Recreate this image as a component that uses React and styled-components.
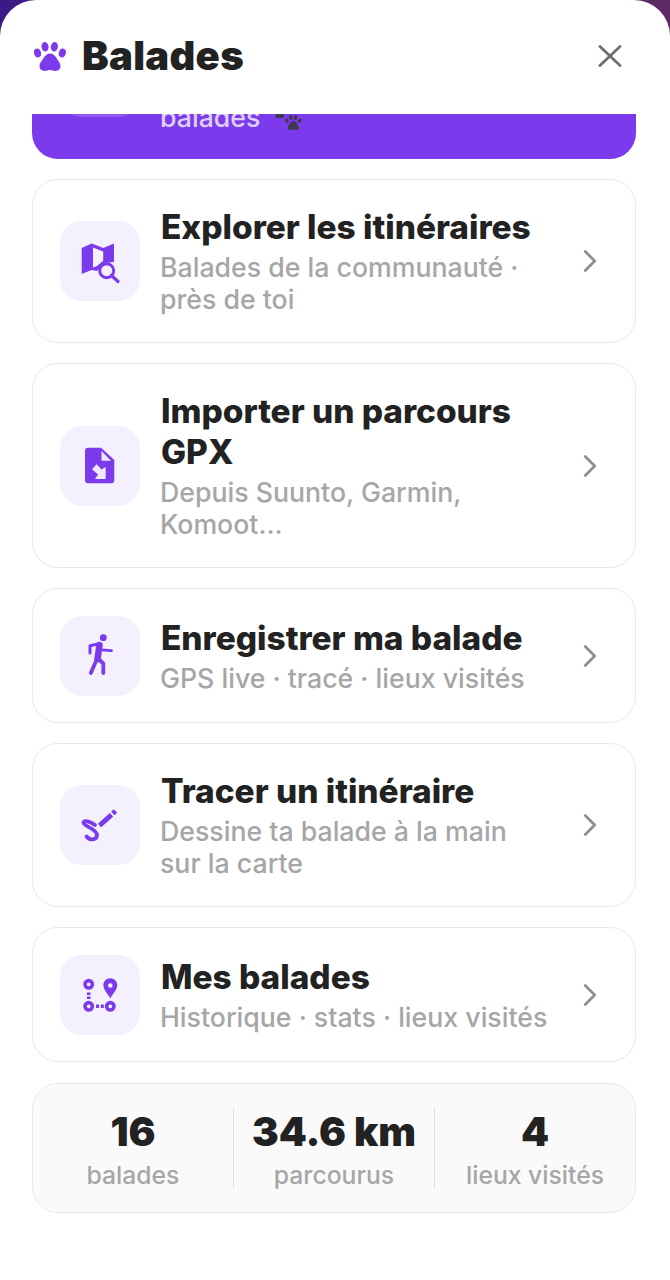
import React from 'react'
import styled, { createGlobalStyle } from 'styled-components'
import { ChevronRight } from 'lucide-react'

const GlobalStyle = createGlobalStyle`
  html, body {
    margin: 0;
    padding: 0;
    background: #fff;
  }
  body {
    font-family: Inter, "Liberation Sans", sans-serif;
  }
`

const Page = styled.div`
  width: 670px;
  height: 1280px;
  overflow: hidden;
  background: linear-gradient(90deg, #3a1b85 0%, #5e2a66 100%);
`
const Sheet = styled.div`
  height: 1280px;
  background: #fff;
  border-radius: 36px 36px 0 0;
  display: flex;
  flex-direction: column;
`
const Header = styled.header`
  height: 114px;
  box-sizing: border-box;
  flex-shrink: 0;
  display: flex;
  align-items: center;
  padding: 0 48px 2px 34px;
`
const HeaderPaw = styled.svg`
  margin-top: 2px;
  flex-shrink: 0;
`
const Title = styled.h1`
  margin: 0 0 0 16px;
  flex: 1;
  font-size: 40px;
  line-height: 46px;
  font-weight: 900;
  letter-spacing: 0.3px;
  color: #222;
`
const CloseButton = styled.button`
  border: 0;
  padding: 0;
  background: none;
  display: flex;
`
const Content = styled.div`
  display: flex;
  flex-direction: column;
  gap: 20px;
  padding: 0 34px 0 32px;
`
const Banner = styled.div`
  height: 45px;
  background: #7c3aed;
  border-radius: 0 0 26px 26px;
  overflow: hidden;
  display: flex;
  align-items: flex-start;
  padding-left: 28px;
`
const BannerTile = styled.div`
  width: 80px;
  height: 80px;
  flex-shrink: 0;
  margin-top: -77px;
  background: rgba(255, 255, 255, 0.16);
  border-radius: 22px;
`
const BannerText = styled.span`
  margin: -13px 0 0 20px;
  font-size: 26.700px;
  line-height: 32px;
  font-weight: 500;
  color: #ddd0fb;
`
const BannerPaw = styled.svg`
  margin-left: 13px;
  width: 32px;
  height: 20px;
  flex-shrink: 0;
`
const Card = styled.div`
  display: flex;
  align-items: center;
  box-sizing: border-box;
  min-height: ${p => p.$height}px;
  padding: 0 26px 0 27px;
  background: #fff;
  border: 1px solid #e9e9eb;
  border-radius: 26px;
`
const Tile = styled.div`
  width: 80px;
  height: 80px;
  flex-shrink: 0;
  margin-right: 21px;
  background: #f4f0fe;
  border-radius: 22px;
`
const Body = styled.div`
  width: 390px;
  margin-right: auto;
  display: flex;
  flex-direction: column;
`
const CardTitle = styled.div`
  font-size: 33.400px;
  line-height: 41px;
  font-weight: 800;
  color: #222;
`
const CardText = styled.div`
  margin: 3px 0 0 -1px;
  font-size: 26.700px;
  line-height: 32px;
  font-weight: 500;
  color: #a6a6a8;
`
const Stats = styled.div`
  display: flex;
  align-items: center;
  height: 130px;
  margin-top: 1px;
  box-sizing: border-box;
  background: #fafafa;
  border: 1px solid #e9e9eb;
  border-radius: 26px;
`
const Stat = styled.div`
  flex: 1;
  height: 82px;
  box-sizing: border-box;
  padding-top: 3px;
  display: flex;
  flex-direction: column;
  align-items: center;
  justify-content: center;
  & + & {
    border-left: 1px solid #e2e2e4;
  }
`
const StatValue = styled.div`
  font-size: 40px;
  line-height: 48px;
  font-weight: 900;
  color: #222;
  white-space: nowrap;
`
const StatLabel = styled.div`
  margin-top: 3px;
  font-size: 24.700px;
  line-height: 32px;
  font-weight: 500;
  color: #a6a6a8;
`
const Chevron = styled(ChevronRight)`
  flex-shrink: 0;
  color: #8e8e92;
`

const Paw = ({ fill }) => (
  <g fill={fill}>
    <ellipse cx="3.5" cy="11" rx="3.4" ry="4.5" transform="rotate(-20 3.5 11)" />
    <ellipse cx="11" cy="4.8" rx="3.5" ry="4.8" transform="rotate(-8 11 4.8)" />
    <ellipse cx="20.4" cy="4.8" rx="3.5" ry="4.8" transform="rotate(8 20.4 4.8)" />
    <ellipse cx="28.3" cy="11" rx="3.4" ry="4.5" transform="rotate(20 28.3 11)" />
    <path d="M16 11.500c3 0 5 2 6.800 5 1.300 2.200 3.700 4.700 3.700 7.600 0 3.200-2.400 4.900-5 4.900-2 0-3.500-.9-5.500-.9s-3.500.9-5.500.9c-2.600 0-5-1.700-5-4.900 0-2.900 2.400-5.400 3.700-7.600 1.800-3 3.800-5 6.800-5z" />
  </g>
)

const purple = '#7c3aed'

const MapIcon = () => (
  <svg width="80" height="80" viewBox="0 0 80 80">
    <path
      fill={purple}
      fillRule="evenodd"
      d="M21.700 27 31.700 22.500 43.300 27 54 22.500V41L44 42 37 50 31.700 49 21.700 53zM33 26.500V46.500L37 45 43.200 39.800V30.500z"
    />
    <circle cx="46.700" cy="49.700" r="7" fill="#f4f0fe" stroke={purple} strokeWidth="3" />
    <path d="M51.500 54.500 58 60.500" stroke={purple} strokeWidth="3.200" strokeLinecap="round" />
  </svg>
)

const FileIcon = () => (
  <svg width="80" height="80" viewBox="0 0 80 80">
    <path
      fill={purple}
      d="M28 21.700h13L54.300 34v20.300a3 3 0 0 1-3 3H28a3 3 0 0 1-3-3V24.700a3 3 0 0 1 3-3z"
    />
    <path fill="#f0e8fe" d="M41.500 25 51 34.800H41.500z" />
    <path fill="#f0e8fe" d="M32 43.300 36.700 38.300 41.500 43.500 45.700 41V53H35L38 48.500z" />
  </svg>
)

const WalkIcon = () => (
  <svg width="80" height="80" viewBox="0 0 80 80">
    <circle cx="43.300" cy="21.700" r="3.400" fill={purple} />
    <g fill="none" stroke={purple} strokeLinecap="round" strokeLinejoin="round">
      <path strokeWidth="6.500" d="M39.500 29 37.500 43" />
      <path strokeWidth="3" d="M38 28 30 29.700V37" />
      <path strokeWidth="2.800" d="M41.700 33.800 51.500 34.600" />
      <path strokeWidth="3.800" d="M36.500 44 30.800 57" />
      <path strokeWidth="3.800" d="M38 42.500 43.300 47.500V57" />
    </g>
  </svg>
)

const DrawIcon = () => (
  <svg width="80" height="80" viewBox="0 0 80 80">
    <g fill="none" stroke={purple} strokeLinecap="round">
      <path
        strokeWidth="3.800"
        d="M35 40C30 36 24 35 23.500 37.500 23 41 37 44 37 50 37 55 30 56 26.500 51.500"
      />
      <path strokeWidth="5" strokeLinecap="butt" d="M39.500 40.500 51.500 29.800" />
      <path strokeWidth="5" strokeLinecap="butt" d="M52.800 28.500 55.500 26" />
    </g>
  </svg>
)

const RouteIcon = () => (
  <svg width="80" height="80" viewBox="0 0 80 80">
    <g fill="none" stroke={purple} strokeWidth="3.600">
      <circle cx="28.700" cy="29.300" r="3.700" />
      <circle cx="28.700" cy="51.300" r="3.700" />
      <circle cx="50.300" cy="51.300" r="3.700" />
      <path d="M28.700 36.500V45" strokeDasharray="2.500 1.500" strokeDashoffset="-1" />
      <path d="M35.500 51.300H44" strokeDasharray="3 1.800" strokeDashoffset="-0.500" />
    </g>
    <path
      fill={purple}
      d="M50.300 23.300c3.900 0 6.900 3 6.900 6.800 0 4.700-4.400 9.100-6.900 13.200-2.500-4.100-6.900-8.500-6.900-13.200 0-3.800 3-6.800 6.900-6.800z"
    />
    <circle cx="50.300" cy="30.500" r="2.300" fill="#f4f0fe" />
  </svg>
)

const items = [
  {
    icon: <MapIcon />,
    height: 164,
    title: 'Explorer les itinéraires',
    text: 'Balades de la communauté · près de toi',
  },
  {
    icon: <FileIcon />,
    height: 205,
    title: 'Importer un parcours GPX',
    text: 'Depuis Suunto, Garmin, Komoot...',
  },
  {
    icon: <WalkIcon />,
    height: 135,
    title: 'Enregistrer ma balade',
    text: 'GPS live · tracé · lieux visités',
  },
  {
    icon: <DrawIcon />,
    height: 164,
    title: 'Tracer un itinéraire',
    text: 'Dessine ta balade à la main sur la carte',
  },
  {
    icon: <RouteIcon />,
    height: 135,
    title: 'Mes balades',
    text: 'Historique · stats · lieux visités',
  },
]

const stats = [
  { value: '16', label: 'balades' },
  { value: '34.6 km', label: 'parcourus' },
  { value: '4', label: 'lieux visités' },
]

const App = () => (
  <Page>
    <GlobalStyle />
    <Sheet>
      <Header>
        <HeaderPaw width="32" height="30" viewBox="0 0 32 30">
          <Paw fill={purple} />
        </HeaderPaw>
        <Title>Balades</Title>
        <CloseButton aria-label="Fermer">
          <svg width="24" height="22" viewBox="0 0 24 22">
            <path d="M2 1.500 22 20.500M22 1.500 2 20.500" stroke="#6f6f6f" strokeWidth="2.800" strokeLinecap="round" />
          </svg>
        </CloseButton>
      </Header>
      <Content>
        <Banner>
          <BannerTile />
          <BannerText>balades</BannerText>
          <BannerPaw viewBox="0 0 32 20">
            <g transform="translate(0 -8) scale(0.42)">
              <Paw fill="#3f3a4d" />
            </g>
            <g transform="translate(12 1) scale(0.52)">
              <Paw fill="#3f3a4d" />
            </g>
          </BannerPaw>
        </Banner>
        {items.map(item => (
          <Card key={item.title} $height={item.height}>
            <Tile>{item.icon}</Tile>
            <Body>
              <CardTitle>{item.title}</CardTitle>
              <CardText>{item.text}</CardText>
            </Body>
            <Chevron size={38} strokeWidth={1.7} />
          </Card>
        ))}
        <Stats>
          {stats.map(stat => (
            <Stat key={stat.label}>
              <StatValue>{stat.value}</StatValue>
              <StatLabel>{stat.label}</StatLabel>
            </Stat>
          ))}
        </Stats>
      </Content>
    </Sheet>
  </Page>
)

export default App
